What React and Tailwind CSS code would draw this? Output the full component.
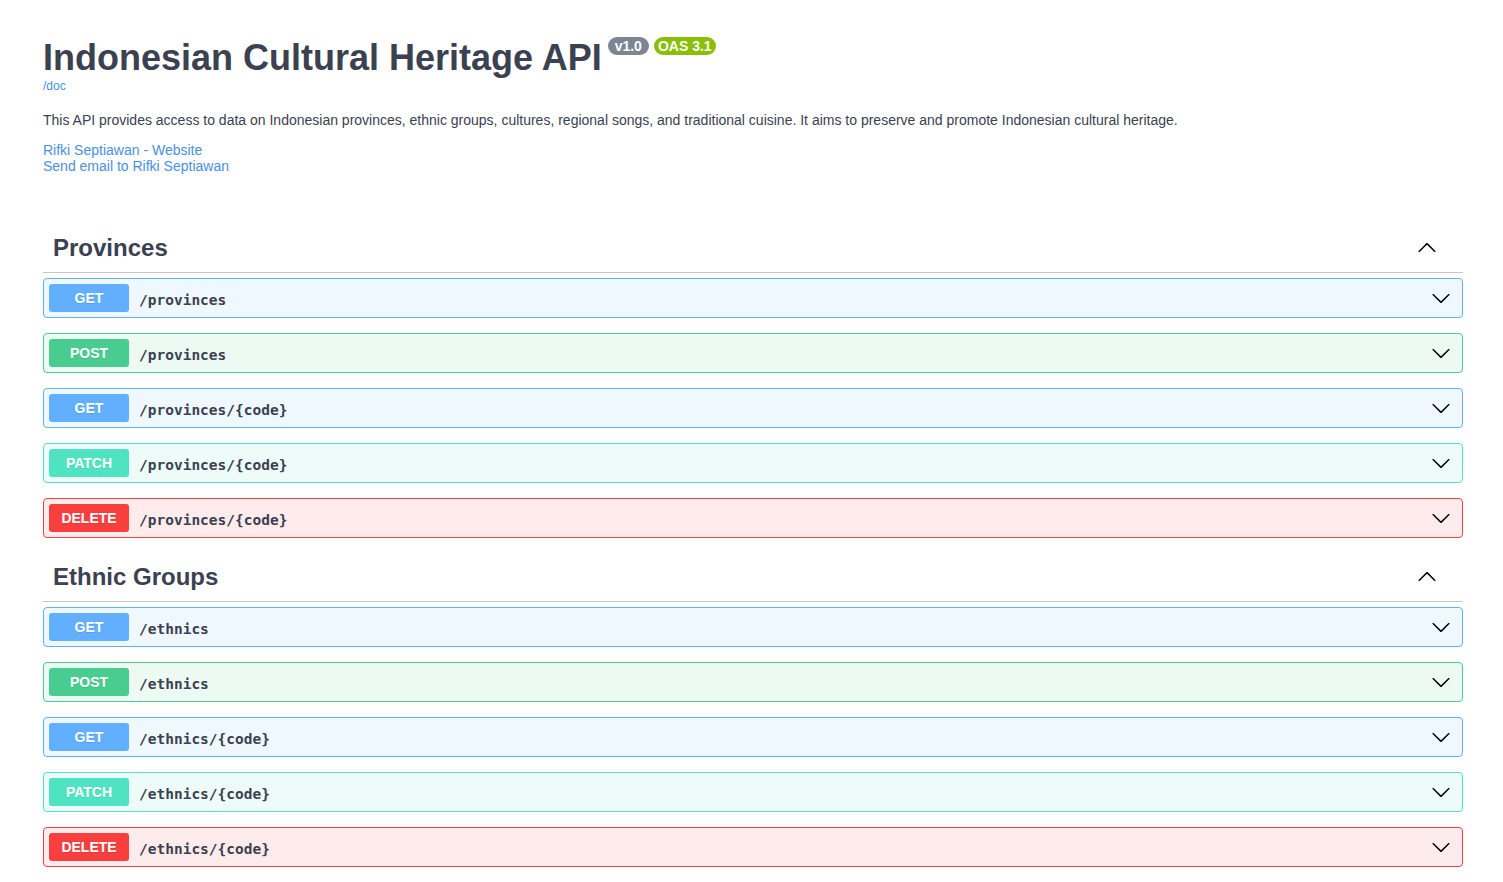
import React from 'react';

const sans = "font-['Liberation_Sans',Arial,sans-serif]";

const METHODS = {
  GET: { row: 'border-[#61affe] bg-[#eff7ff]', badge: 'bg-[#61affe]' },
  POST: { row: 'border-[#49cc90] bg-[#edfaf4]', badge: 'bg-[#49cc90]' },
  PATCH: { row: 'border-[#50e3c2] bg-[#eefcf9]', badge: 'bg-[#50e3c2]' },
  DELETE: { row: 'border-[#f93e3e] bg-[#feecec]', badge: 'bg-[#f93e3e]' },
};

const sections = [
  {
    name: 'Provinces',
    ops: [
      ['GET', '/provinces'],
      ['POST', '/provinces'],
      ['GET', '/provinces/{code}'],
      ['PATCH', '/provinces/{code}'],
      ['DELETE', '/provinces/{code}'],
    ],
  },
  {
    name: 'Ethnic Groups',
    ops: [
      ['GET', '/ethnics'],
      ['POST', '/ethnics'],
      ['GET', '/ethnics/{code}'],
      ['PATCH', '/ethnics/{code}'],
      ['DELETE', '/ethnics/{code}'],
    ],
  },
];

// swagger-ui's chevron
const Arrow = ({ up }) => (
  <svg width="20" height="20" viewBox="0 0 20 20" className={up ? 'rotate-180' : ''}>
    <path
      fill="#000"
      d="M17.418 6.109c.272-.268.709-.268.979 0s.271.701 0 .969l-7.908 7.83c-.27.268-.707.268-.979 0l-7.908-7.83c-.27-.268-.27-.701 0-.969.271-.268.709-.268.979 0L10 13.25l7.418-7.141z"
    />
  </svg>
);

const Operation = ({ method, path }) => {
  const m = METHODS[method];
  return (
    <div className={`mb-[15px] flex h-[40px] items-center rounded-[4px] border p-[5px] ${m.row}`}>
      <span
        className={`w-[80px] rounded-[3px] py-[6px] text-center text-[14px] leading-[16px] font-bold text-white text-shadow-[0_1px_0_rgba(0,0,0,0.1)] ${m.badge}`}
      >
        {method}
      </span>
      <span className="flex-1 px-[10px] pt-[3px] font-['DejaVu_Sans_Mono',monospace] text-[14.5px] leading-[18px] font-semibold text-[#3b4151]">
        {path}
      </span>
      <span className="mr-[6px] flex">
        <Arrow />
      </span>
    </div>
  );
};

export default function App() {
  return (
    <div className={`min-h-screen bg-white ${sans} text-[#3b4151]`}>
      <div className="ml-[43px] w-[1420px] pt-[37px]">
        <div className="flex items-start">
          <h1 className="text-[36px] leading-[41px] font-bold">Indonesian Cultural Heritage API</h1>
          <div className="ml-[6px] flex gap-[5px]">
            <span className="flex h-[18px] w-[41px] items-center justify-center rounded-full bg-[#7d8492] text-[14px] font-bold text-white">
              v1.0
            </span>
            <span className="flex h-[18px] w-[62px] items-center justify-center rounded-full bg-[#89bf04] text-[14px] font-bold text-white">
              OAS 3.1
            </span>
          </div>
        </div>
        <a className="block text-[12px] leading-[16px] text-[#4990e2]">/doc</a>
        <p className="mt-[16px] text-[14px] leading-[21px]">
          This API provides access to data on Indonesian provinces, ethnic groups, cultures, regional songs, and traditional cuisine. It aims to preserve and promote Indonesian cultural heritage.
        </p>
        <div className="mt-[11px] text-[14px] leading-[16px] text-[#4990e2]">
          <a className="block">Rifki Septiawan - Website</a>
          <a className="block">Send email to Rifki Septiawan</a>
        </div>

        <div className="mt-[53px]">
          {sections.map((s) => (
            <div key={s.name} className="pb-[3px]">
              <div className="mb-[5px] flex h-[46px] items-center border-b border-[#c4c6cb] pr-[26px] pb-[3px] pl-[10px]">
                <h3 className="flex-1 text-[24px] font-bold">{s.name}</h3>
                <Arrow up />
              </div>
              {s.ops.map(([method, path], i) => (
                <Operation key={i} method={method} path={path} />
              ))}
            </div>
          ))}
        </div>
      </div>
    </div>
  );
}
